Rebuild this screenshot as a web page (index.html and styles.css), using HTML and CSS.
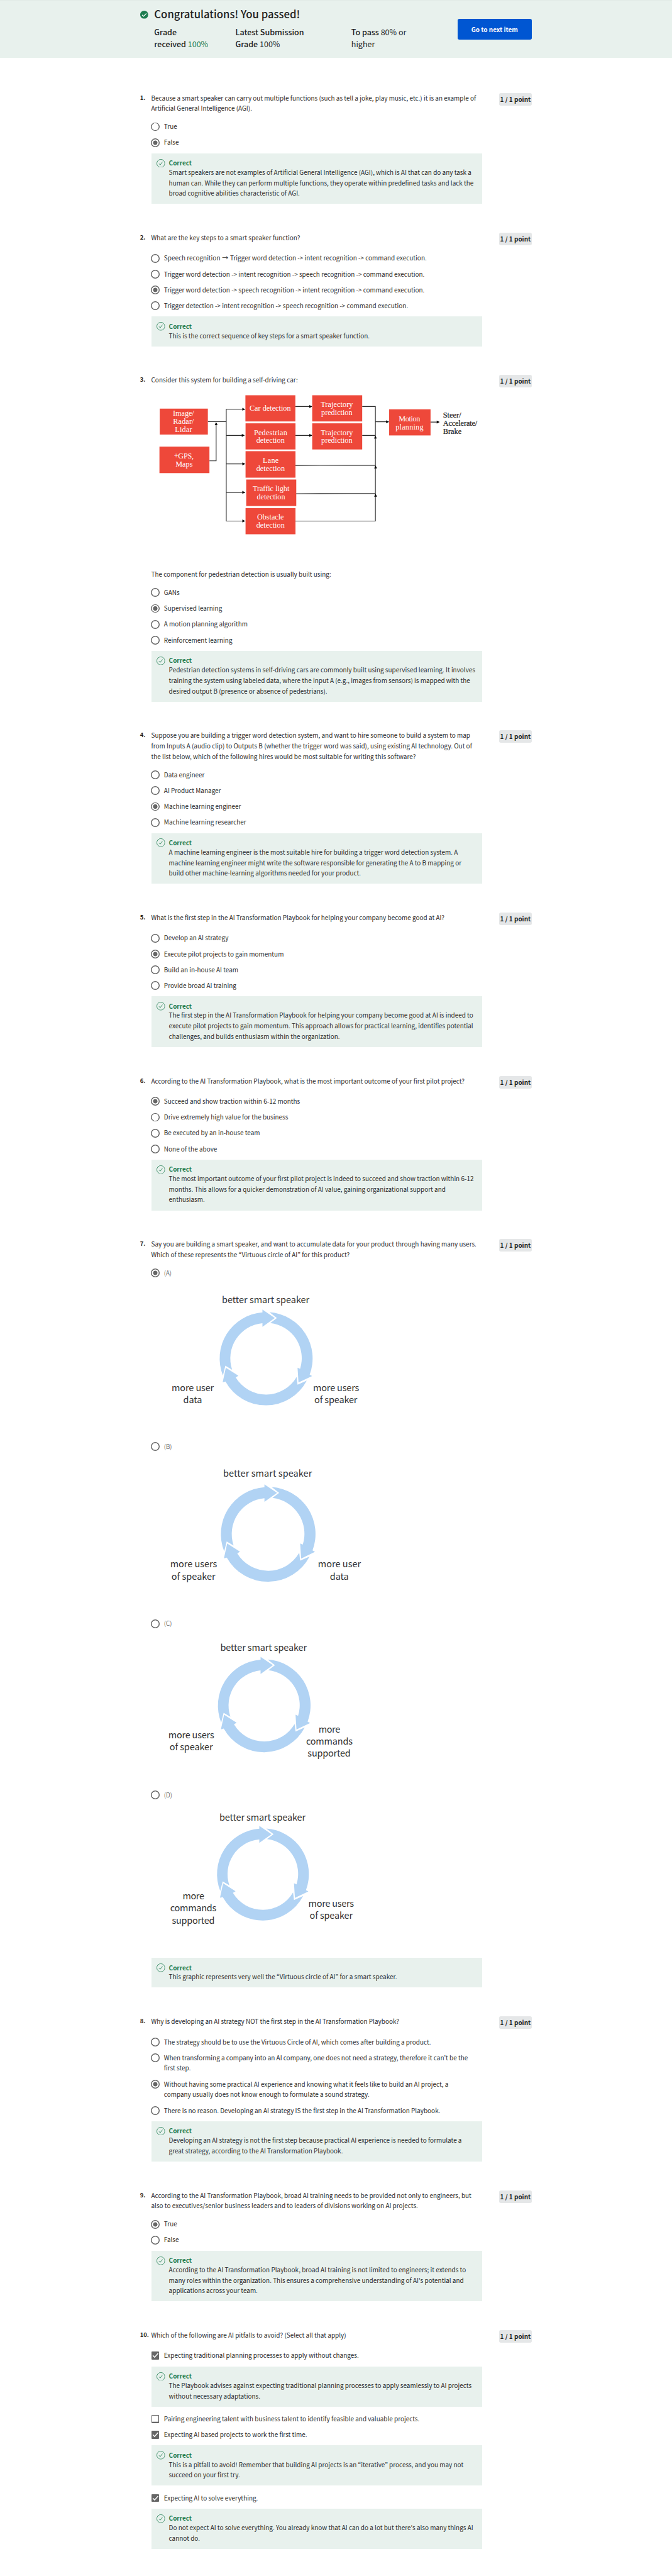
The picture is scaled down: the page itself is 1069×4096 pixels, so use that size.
FILE: index.html
```html
<!DOCTYPE html>
<html lang="en">
<head>
<meta charset="utf-8">
<title>Quiz results</title>
<link rel="stylesheet" href="styles.css">
</head>
<body>
<svg class="defs" aria-hidden="true">
  <symbol id="ok" viewBox="0 0 24 24">
    <circle cx="12" cy="12" r="11.2" fill="none" stroke="currentColor" stroke-width="1.4"/>
    <path d="M6.8 12.6l3.4 3.6 6.4-8.2" fill="none" stroke="currentColor" stroke-width="1.5"/>
  </symbol>
  <symbol id="passed" viewBox="0 0 24 24">
    <circle cx="12" cy="12" r="12" fill="currentColor"/>
    <path d="M5.8 12.6l4.3 4.2 8.3-8.6" fill="none" stroke="#fff" stroke-width="2.4"/>
  </symbol>
  <symbol id="check" viewBox="0 0 24 24">
    <path d="M4.2 12.2l5.2 5.4 10.6-12" fill="none" stroke="#fff" stroke-width="2.8"/>
  </symbol>
  <g id="ring" fill="#b1d3f4">
    <path d="M480 61A396 396 0 0 1 824 595L845 607L728 663L720 536L742 545A303 303 0 0 0 486 153L543 110Z"/>
    <path d="M80 603A396 396 0 0 1 419 62L419 38L525 110L419 185L419 155A303 303 0 0 0 159 553L101 519Z"/>
    <path d="M799 646A396 396 0 0 1 102 655L78 661L105 536L213 605L190 619A303 303 0 0 0 712 615L720 681Z"/>
  </g>
</svg>

<header class="banner">
  <svg class="banner-icon"><use href="#passed"/></svg>
  <div class="banner-body">
    <h1>Congratulations! You passed!</h1>
    <div class="grades">
      <p><b>Grade<br>received</b> <span class="green">100%</span></p>
      <p><b>Latest Submission<br>Grade</b> 100%</p>
      <p><b>To pass</b> 80% or<br>higher</p>
    </div>
  </div>
  <button class="next">Go to next item</button>
</header>

<main>
  <section class="q">
    <div class="num">1.</div>
    <div class="main">
      <p class="stem">Because a smart speaker can carry out multiple functions (such as tell a joke, play music, etc.) it is an example of<br>Artificial General Intelligence (AGI).</p>
      <div class="opt"><i class="radio"></i><span>True</span></div>
      <div class="opt"><i class="radio on"></i><span>False</span></div>
      <div class="fb"><svg><use href="#ok"/></svg><div><h3>Correct</h3><p>Smart speakers are not examples of Artificial General Intelligence (AGI), which is AI that can do any task a<br>human can. While they can perform multiple functions, they operate within predefined tasks and lack the<br>broad cognitive abilities characteristic of AGI.</p></div></div>
    </div>
    <div class="pts">1 / 1 point</div>
  </section>

  <section class="q">
    <div class="num">2.</div>
    <div class="main">
      <p class="stem">What are the key steps to a smart speaker function?</p>
      <div class="opt"><i class="radio"></i><span>Speech recognition <span class="arrow">→</span> Trigger word detection -&gt; intent recognition -&gt; command execution.</span></div>
      <div class="opt"><i class="radio"></i><span>Trigger word detection -&gt; intent recognition -&gt; speech recognition -&gt; command execution.</span></div>
      <div class="opt"><i class="radio on"></i><span>Trigger word detection -&gt; speech recognition -&gt; intent recognition -&gt; command execution.</span></div>
      <div class="opt"><i class="radio"></i><span>Trigger detection -&gt; intent recognition -&gt; speech recognition -&gt; command execution.</span></div>
      <div class="fb"><svg><use href="#ok"/></svg><div><h3>Correct</h3><p>This is the correct sequence of key steps for a smart speaker function.</p></div></div>
    </div>
    <div class="pts">1 / 1 point</div>
  </section>

  <section class="q">
    <div class="num">3.</div>
    <div class="main">
      <div class="stem">
        <p>Consider this system for building a self-driving car:</p>
        <svg class="flow" viewBox="0 0 945 524.5">
          <g class="wires">
            <path d="M161 103.3H213.6M165.5 215H184.7V110M267 67.8H213.6V387H267M213.6 142.5H265M213.6 223.8H267M213.6 305.2H267"/>
            <path d="M411 60H458M411 142.5H458M602 60H639.7V387H411M602 142.5H639.7M411 228.3L639.7 227.5M412.5 309L639.7 308M639.7 103.6H678M797 104.4H822"/>
          </g>
          <g class="heads">
            <path d="M267.6 67.8l-8-4.2v8.4zM266 142.5l-8-4.2v8.4zM267.6 223.8l-8-4.2v8.4zM267.6 305.2l-8-4.2v8.4zM267.6 387l-8-4.2v8.4z"/>
            <path d="M459 60l-8-4.2v8.4zM459 142.5l-8-4.2v8.4zM678.5 103.6l-8-4.2v8.4zM823 104.4l-8-4.2v8.4z"/>
            <path d="M184.7 104.5l-4.2 8h8.4zM639.7 143.5l-4.2 8h8.4zM640.3 228.5l-4.2 8h8.4zM640.3 309.5l-4.2 8h8.4z"/>
          </g>
          <g class="boxes">
            <rect x="23.5" y="66" width="137.5" height="74"/>
            <rect x="22.7" y="174.6" width="142.8" height="75.6"/>
            <rect x="268.3" y="27.8" width="142.7" height="74.8"/>
            <rect x="268.7" y="108" width="142.7" height="74.6"/>
            <rect x="268.7" y="187.5" width="142.7" height="75.7"/>
            <rect x="270.6" y="268.5" width="143" height="75.7"/>
            <rect x="268.7" y="350" width="142.7" height="74.8"/>
            <rect x="459.2" y="27.8" width="142.8" height="74.8"/>
            <rect x="459.2" y="108" width="142.8" height="74.6"/>
            <rect x="679" y="68" width="118.3" height="74.6"/>
          </g>
          <g class="labels">
            <text x="61.2" y="87" textLength="60.5">Image/</text>
            <text x="61.7" y="109.9" textLength="59.5">Radar/</text>
            <text x="67" y="132.9" textLength="49">Lidar</text>
            <text x="64" y="207.6" textLength="56.5">+GPS,</text>
            <text x="68.5" y="230.9" textLength="49">Maps</text>
            <text x="280" y="72.6" textLength="118">Car detection</text>
            <text x="292.7" y="141.4" textLength="95">Pedestrian</text>
            <text x="299.4" y="164.3" textLength="81">detection</text>
            <text x="317.8" y="221.6" textLength="45.5">Lane</text>
            <text x="299.4" y="244.6" textLength="81.5">detection</text>
            <text x="289" y="301.9" textLength="105">Traffic light</text>
            <text x="300.8" y="324.8" textLength="81">detection</text>
            <text x="301.6" y="383.3" textLength="76.5">Obstacle</text>
            <text x="299.4" y="405.8" textLength="81">detection</text>
            <text x="483.6" y="61.5" textLength="92">Trajectory</text>
            <text x="485" y="84.2" textLength="89">prediction</text>
            <text x="483.6" y="141.4" textLength="92">Trajectory</text>
            <text x="485" y="164.3" textLength="89">prediction</text>
            <text x="706.3" y="102.5" textLength="61.5">Motion</text>
            <text x="697.4" y="125.1" textLength="79.5">planning</text>
            <g class="dark">
              <text x="832.8" y="92.2" textLength="52">Steer/</text>
              <text x="832.8" y="115.5" textLength="98">Accelerate/</text>
              <text x="832.8" y="138" textLength="53">Brake</text>
            </g>
          </g>
        </svg>
        <p>The component for pedestrian detection is usually built using:</p>
      </div>
      <div class="opt"><i class="radio"></i><span>GANs</span></div>
      <div class="opt"><i class="radio on"></i><span>Supervised learning</span></div>
      <div class="opt"><i class="radio"></i><span>A motion planning algorithm</span></div>
      <div class="opt"><i class="radio"></i><span>Reinforcement learning</span></div>
      <div class="fb"><svg><use href="#ok"/></svg><div><h3>Correct</h3><p>Pedestrian detection systems in self-driving cars are commonly built using supervised learning. It involves<br>training the system using labeled data, where the input A (e.g., images from sensors) is mapped with the<br>desired output B (presence or absence of pedestrians).</p></div></div>
    </div>
    <div class="pts">1 / 1 point</div>
  </section>

  <section class="q">
    <div class="num">4.</div>
    <div class="main">
      <p class="stem">Suppose you are building a trigger word detection system, and want to hire someone to build a system to map<br>from Inputs A (audio clip) to Outputs B (whether the trigger word was said), using existing AI technology. Out of<br>the list below, which of the following hires would be most suitable for writing this software?</p>
      <div class="opt"><i class="radio"></i><span>Data engineer</span></div>
      <div class="opt"><i class="radio"></i><span>AI Product Manager</span></div>
      <div class="opt"><i class="radio on"></i><span>Machine learning engineer</span></div>
      <div class="opt"><i class="radio"></i><span>Machine learning researcher</span></div>
      <div class="fb"><svg><use href="#ok"/></svg><div><h3>Correct</h3><p>A machine learning engineer is the most suitable hire for building a trigger word detection system. A<br>machine learning engineer might write the software responsible for generating the A to B mapping or<br>build other machine-learning algorithms needed for your product.</p></div></div>
    </div>
    <div class="pts">1 / 1 point</div>
  </section>

  <section class="q">
    <div class="num">5.</div>
    <div class="main">
      <p class="stem">What is the first step in the AI Transformation Playbook for helping your company become good at AI?</p>
      <div class="opt"><i class="radio"></i><span>Develop an AI strategy</span></div>
      <div class="opt"><i class="radio on"></i><span>Execute pilot projects to gain momentum</span></div>
      <div class="opt"><i class="radio"></i><span>Build an in-house AI team</span></div>
      <div class="opt"><i class="radio"></i><span>Provide broad AI training</span></div>
      <div class="fb"><svg><use href="#ok"/></svg><div><h3>Correct</h3><p>The first step in the AI Transformation Playbook for helping your company become good at AI is indeed to<br>execute pilot projects to gain momentum. This approach allows for practical learning, identifies potential<br>challenges, and builds enthusiasm within the organization.</p></div></div>
    </div>
    <div class="pts">1 / 1 point</div>
  </section>

  <section class="q">
    <div class="num">6.</div>
    <div class="main">
      <p class="stem">According to the AI Transformation Playbook, what is the most important outcome of your first pilot project?</p>
      <div class="opt"><i class="radio on"></i><span>Succeed and show traction within 6-12 months</span></div>
      <div class="opt"><i class="radio"></i><span>Drive extremely high value for the business</span></div>
      <div class="opt"><i class="radio"></i><span>Be executed by an in-house team</span></div>
      <div class="opt"><i class="radio"></i><span>None of the above</span></div>
      <div class="fb"><svg><use href="#ok"/></svg><div><h3>Correct</h3><p>The most important outcome of your first pilot project is indeed to succeed and show traction within 6-12<br>months. This allows for a quicker demonstration of AI value, gaining organizational support and<br>enthusiasm.</p></div></div>
    </div>
    <div class="pts">1 / 1 point</div>
  </section>

  <section class="q">
    <div class="num">7.</div>
    <div class="main">
      <p class="stem">Say you are building a smart speaker, and want to accumulate data for your product through having many users.<br>Which of these represents the “Virtuous circle of AI” for this product?</p>
      <div class="opt"><i class="radio on"></i><div><span class="letter">(A)</span>
        <svg class="cycle cycle-a" viewBox="0 0 680 450.7">
          <use href="#ring" transform="translate(291.4 228.3) scale(.3333) translate(-450 -457)"/>
          <text x="165.3" y="70.9" textLength="250">better smart speaker</text>
          <text x="21.7" y="321.1" textLength="120.6">more user</text>
          <text x="55" y="355.9" textLength="53.3">data</text>
          <text x="425.7" y="321.1" textLength="131.7">more users</text>
          <text x="429.4" y="355.9" textLength="122.8">of speaker</text>
        </svg></div></div>
      <div class="opt"><i class="radio"></i><div><span class="letter">(B)</span>
        <svg class="cycle cycle-b" viewBox="0 0 680 459.8">
          <use href="#ring" transform="translate(297.3 234) scale(.3392) translate(-450 -457)"/>
          <text x="169" y="70.1" textLength="253.7">better smart speaker</text>
          <text x="17.3" y="327.9" textLength="133.9">more users</text>
          <text x="21" y="364" textLength="125.8">of speaker</text>
          <text x="439.7" y="327.9" textLength="122.8">more user</text>
          <text x="473.8" y="364" textLength="53.5">data</text>
        </svg></div></div>
      <div class="opt"><i class="radio"></i><div><span class="letter">(C)</span>
        <svg class="cycle cycle-c" viewBox="0 0 680 444.4">
          <use href="#ring" transform="translate(286 219) scale(.332) translate(-450 -457)"/>
          <text x="160.8" y="63.4" textLength="247.1">better smart speaker</text>
          <text x="12.1" y="312" textLength="131">more users</text>
          <text x="15.8" y="346.3" textLength="123.6">of speaker</text>
          <text x="441.2" y="296" textLength="62.1">more</text>
          <text x="405.7" y="330.3" textLength="133.2">commands</text>
          <text x="410.1" y="364.6" textLength="122.8">supported</text>
        </svg></div></div>
      <div class="opt"><i class="radio"></i><div><span class="letter">(D)</span>
        <svg class="cycle cycle-d" viewBox="0 0 680 434.7">
          <use href="#ring" transform="translate(282.3 210.3) scale(.3293) translate(-450 -457)"/>
          <text x="157.9" y="57.4" textLength="246.3">better smart speaker</text>
          <text x="52.8" y="282.2" textLength="62.1">more</text>
          <text x="17.3" y="316.7" textLength="132.4">commands</text>
          <text x="22.5" y="351.2" textLength="122">supported</text>
          <text x="412.4" y="302.8" textLength="130.2">more users</text>
          <text x="416" y="336.9" textLength="122.9">of speaker</text>
        </svg></div></div>
      <div class="fb"><svg><use href="#ok"/></svg><div><h3>Correct</h3><p>This graphic represents very well the “Virtuous circle of AI” for a smart speaker.</p></div></div>
    </div>
    <div class="pts">1 / 1 point</div>
  </section>

  <section class="q">
    <div class="num">8.</div>
    <div class="main">
      <p class="stem">Why is developing an AI strategy NOT the first step in the AI Transformation Playbook?</p>
      <div class="opt"><i class="radio"></i><span>The strategy should be to use the Virtuous Circle of AI, which comes after building a product.</span></div>
      <div class="opt"><i class="radio"></i><span>When transforming a company into an AI company, one does not need a strategy, therefore it can’t be the<br>first step.</span></div>
      <div class="opt"><i class="radio on"></i><span>Without having some practical AI experience and knowing what it feels like to build an AI project, a<br>company usually does not know enough to formulate a sound strategy.</span></div>
      <div class="opt"><i class="radio"></i><span>There is no reason. Developing an AI strategy IS the first step in the AI Transformation Playbook.</span></div>
      <div class="fb"><svg><use href="#ok"/></svg><div><h3>Correct</h3><p>Developing an AI strategy is not the first step because practical AI experience is needed to formulate a<br>great strategy, according to the AI Transformation Playbook.</p></div></div>
    </div>
    <div class="pts">1 / 1 point</div>
  </section>

  <section class="q">
    <div class="num">9.</div>
    <div class="main">
      <p class="stem">According to the AI Transformation Playbook, broad AI training needs to be provided not only to engineers, but<br>also to executives/senior business leaders and to leaders of divisions working on AI projects.</p>
      <div class="opt"><i class="radio on"></i><span>True</span></div>
      <div class="opt"><i class="radio"></i><span>False</span></div>
      <div class="fb"><svg><use href="#ok"/></svg><div><h3>Correct</h3><p>According to the AI Transformation Playbook, broad AI training is not limited to engineers; it extends to<br>many roles within the organization. This ensures a comprehensive understanding of AI's potential and<br>applications across your team.</p></div></div>
    </div>
    <div class="pts">1 / 1 point</div>
  </section>

  <section class="q">
    <div class="num">10.</div>
    <div class="main">
      <p class="stem">Which of the following are AI pitfalls to avoid? (Select all that apply)</p>
      <div class="opt"><i class="box on"><svg><use href="#check"/></svg></i><span>Expecting traditional planning processes to apply without changes.</span></div>
      <div class="fb"><svg><use href="#ok"/></svg><div><h3>Correct</h3><p>The Playbook advises against expecting traditional planning processes to apply seamlessly to AI projects<br>without necessary adaptations.</p></div></div>
      <div class="opt"><i class="box"></i><span>Pairing engineering talent with business talent to identify feasible and valuable projects.</span></div>
      <div class="opt"><i class="box on"><svg><use href="#check"/></svg></i><span>Expecting AI based projects to work the first time.</span></div>
      <div class="fb"><svg><use href="#ok"/></svg><div><h3>Correct</h3><p>This is a pitfall to avoid! Remember that building AI projects is an “iterative” process, and you may not<br>succeed on your first try.</p></div></div>
      <div class="opt"><i class="box on"><svg><use href="#check"/></svg></i><span>Expecting AI to solve everything.</span></div>
      <div class="fb"><svg><use href="#ok"/></svg><div><h3>Correct</h3><p>Do not expect AI to solve everything. You already know that AI can do a lot but there's also many things AI<br>cannot do.</p></div></div>
    </div>
    <div class="pts">1 / 1 point</div>
  </section>
</main>
</body>
</html>
```

FILE: styles.css
```css
/* 1rem = 1/192 of the page width */
html {
  font-size: 5.56771px;
}

* {
  box-sizing: border-box;
}

body {
  margin: 0;
  width: 192rem;
  height: 4096px;
  overflow: hidden;
  background: #fff;
  color: #2c2c2c;
  font-family: "Noto Sans CJK KR", "Noto Sans", sans-serif;
  font-size: 1.79rem;
  line-height: 3rem;
  white-space: nowrap;
}

h1, h3, p {
  margin: 0;
}

.defs {
  display: none;
}

.banner {
  display: flex;
  align-items: flex-start;
  height: 16.5rem;
  padding: 2.06rem 40rem 0 40.1rem;
  background: #e8f1ed;
  box-shadow: inset 0 1px 0 #e2eae7;
  color: #1f1f1f;
}

.banner-icon {
  flex: none;
  width: 2.3rem;
  height: 2.3rem;
  margin: 1.03rem 1.67rem 0 0;
  color: #1d7c50;
}

.banner-body {
  flex: none;
  width: 86.6rem;
}

h1 {
  font-size: 3rem;
  font-weight: 500;
  line-height: 4rem;
}

.grades {
  display: grid;
  grid-template-columns: 23.2rem 33.1rem auto;
  margin-top: 1.28rem;
  font-size: 2.25rem;
  line-height: 3.5rem;
}

.grades b {
  font-weight: 500;
}

.green {
  color: #1d7c50;
}

.next {
  flex: none;
  width: 21.3rem;
  height: 6rem;
  margin-top: 3.25rem;
  padding: 0;
  border: 0;
  border-radius: .5rem;
  background: #0056d2;
  color: #fff;
  font: 700 1.79rem/6rem "Noto Sans CJK KR", "Noto Sans", sans-serif;
}

main {
  display: flex;
  flex-direction: column;
  gap: 8.22rem;
  padding: 10rem 0 0 40rem;
}

.q {
  display: grid;
  grid-template-columns: 3.2rem 94.5rem 4.83rem 9.47rem;
}

.num {
  color: #1f1f1f;
  font-weight: 700;
  font-size: 1.7rem;
  line-height: 2.8rem;
}

.pts {
  grid-column: 4;
  height: 3.6rem;
  border-radius: .5rem;
  background: #e5e7e8;
  color: #1f1f1f;
  font-size: 1.79rem;
  font-weight: 700;
  line-height: 3.6rem;
  text-align: center;
}

.stem {
  min-height: 3.6rem;
  margin-bottom: 2.2rem;
}

.flow {
  display: block;
  width: 94.5rem;
  height: 52.45rem;
}

.wires {
  fill: none;
  stroke: #2b2b2b;
  stroke-width: 2;
}

.heads {
  fill: #000;
}

.boxes {
  fill: #ee483a;
}

.labels {
  fill: #fff;
  font-family: "Liberation Serif", serif;
  font-size: 22px;
}

.dark {
  fill: #222;
  stroke: #222;
  stroke-width: .4;
}

.arrow {
  display: inline-block;
  width: 2rem;
  text-align: center;
}

.opt {
  display: flex;
  gap: 1.25rem;
  margin-bottom: 1.53rem;
}

.radio {
  flex: none;
  width: 2.5rem;
  height: 2.5rem;
  margin: .25rem 0 0 -.1rem;
  border-radius: 50%;
  background: radial-gradient(circle, #fff .94rem, #666 1.04rem);
}

.radio.on {
  background: radial-gradient(circle, #666 .58rem, #fff .68rem, #fff .94rem, #666 1.04rem);
}

.box {
  flex: none;
  display: block;
  width: 2.25rem;
  height: 2.25rem;
  margin: .37rem .15rem 0 0;
  border-radius: .2rem;
  background: linear-gradient(#fff, #fff) center / 1.75rem 1.75rem no-repeat #666;
}

.box.on {
  background: #666;
}

.box svg {
  display: block;
  width: 100%;
  height: 100%;
}

.letter {
  display: block;
  font-weight: 300;
}

.cycle {
  display: block;
  width: 68rem;
  fill: #333;
  font-size: 26px;
}

.cycle-a { height: 45.07rem; }
.cycle-b { height: 45.98rem; }
.cycle-c { height: 44.44rem; }
.cycle-d { height: 43.47rem; }

.fb {
  display: flex;
  gap: 1.1rem;
  padding: 1.5rem 0 1.5rem 1.5rem;
  background: #e8f1ed;
}

.fb > svg {
  flex: none;
  width: 2.45rem;
  height: 2.45rem;
  margin-top: .1rem;
  color: #1d7c50;
}

.fb h3 {
  color: #1d7c50;
  font-size: 1.79rem;
  font-weight: 700;
  line-height: 2.5rem;
}

.fb + .opt {
  margin-top: 2.05rem;
}
```
